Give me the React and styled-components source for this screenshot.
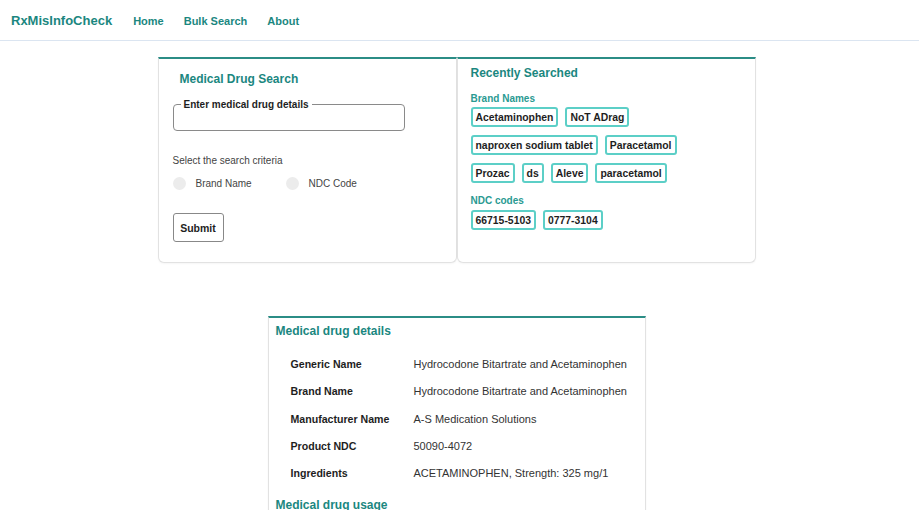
import React from "react";
import styled, { createGlobalStyle } from "styled-components";

const GlobalStyle = createGlobalStyle`
  * {
    margin: 0;
    padding: 0;
    box-sizing: border-box;
  }
  body {
    font-family: "Liberation Sans", Arial, sans-serif;
    background: #ffffff;
    color: #222;
  }
`;

const teal = "#1b877f";

const Nav = styled.nav`
  height: 41px;
  display: flex;
  align-items: center;
  padding: 1px 0 0 11px;
  border-bottom: 1px solid #dbe5f1;
`;

const Logo = styled.div`
  font-size: 13px;
  font-weight: bold;
  color: ${teal};
  margin-right: 21px;
`;

const NavLink = styled.a`
  font-size: 11px;
  font-weight: bold;
  color: ${teal};
  margin-right: 20px;
  text-decoration: none;
`;

const Main = styled.main`
  display: flex;
  flex-direction: column;
  align-items: center;
  padding-top: 16px;
  padding-right: 6px;
`;

const Row = styled.div`
  display: grid;
  grid-template-columns: 299px 299px;
  width: 598px;
`;

const Card = styled.section`
  background: #fff;
  border: 1px solid #e2e2e2;
  border-top: 2px solid #2b8d86;
  border-radius: 0 0 6px 6px;
  box-shadow: 0 1px 2px rgba(0, 0, 0, 0.04);
  padding: ${(p) => p.$pad || "14px"};
  height: ${(p) => p.$h || "auto"};
`;

const Title = styled.h2`
  font-size: 12px;
  font-weight: bold;
  color: ${teal};
  margin-left: ${(p) => p.$indent || 0}px;
  margin-top: ${(p) => p.$top || 0}px;
`;

const Fieldset = styled.fieldset`
  width: 232px;
  height: 32px;
  border: 1.5px solid #8a8a8a;
  border-radius: 4px;
  margin-top: 13px;
  padding: 0 7px;
`;

const Legend = styled.legend`
  font-size: 10px;
  font-weight: bold;
  padding: 0 3px;
  color: #1e1e1e;
`;

const Hint = styled.p`
  font-size: 10px;
  color: #444;
  margin-top: 24px;
`;

const Radios = styled.div`
  display: flex;
  margin-top: 11px;
`;

const RadioOpt = styled.label`
  display: flex;
  align-items: center;
  font-size: 10px;
  color: #444;
  width: 113px;
`;

const Dot = styled.span`
  width: 13px;
  height: 13px;
  border-radius: 50%;
  background: #ececec;
  margin-right: 10px;
`;

const Submit = styled.button`
  margin-top: 23px;
  width: 51px;
  height: 29px;
  background: #fff;
  border: 1.5px solid #888;
  border-radius: 3px;
  font-family: inherit;
  font-size: 10.5px;
  font-weight: bold;
  color: #1e1e1e;
`;

const Sub = styled.h3`
  font-size: 10px;
  font-weight: bold;
  color: #2a9a92;
  margin-top: ${(p) => p.$top || 0}px;
  margin-bottom: ${(p) => p.$bottom || 3}px;
`;

const Tags = styled.div`
  display: flex;
  flex-wrap: wrap;
  gap: 8px 7px;
  width: 240px;
`;

const Tag = styled.span`
  height: 20px;
  display: inline-flex;
  align-items: center;
  padding: 0 3px;
  border: 2px solid #5ccfc7;
  border-radius: 3px;
  font-size: 10.4px;
  font-weight: bold;
  color: #1e1e1e;
`;

const DetailCard = styled(Card)`
  width: 378px;
  margin-top: 53px;
  border-bottom: none;
  border-radius: 0;
  padding: 6px 7px 0;
`;

const Table = styled.div`
  display: grid;
  grid-template-columns: 123px 1fr;
  padding: 20px 0 0 15px;
`;

const Label = styled.div`
  font-size: 10.6px;
  font-weight: bold;
  color: #1e1e1e;
  height: 27.3px;
`;

const Value = styled.div`
  font-size: 11px;
  color: #333;
  height: 27.3px;
`;

const brands = [
  "Acetaminophen",
  "NoT ADrag",
  "naproxen sodium tablet",
  "Paracetamol",
  "Prozac",
  "ds",
  "Aleve",
  "paracetamol",
];
const ndcs = ["66715-5103", "0777-3104"];

const details = [
  ["Generic Name", "Hydrocodone Bitartrate and Acetaminophen"],
  ["Brand Name", "Hydrocodone Bitartrate and Acetaminophen"],
  ["Manufacturer Name", "A-S Medication Solutions"],
  ["Product NDC", "50090-4072"],
  ["Ingredients", "ACETAMINOPHEN, Strength: 325 mg/1"],
];

export default function App() {
  return (
    <div>
      <GlobalStyle />
      <Nav>
        <Logo>RxMisInfoCheck</Logo>
        <NavLink href="#">Home</NavLink>
        <NavLink href="#">Bulk Search</NavLink>
        <NavLink href="#">About</NavLink>
      </Nav>
      <Main>
        <Row>
          <Card $h="206px" $pad="13px 14px">
            <Title $indent={7}>Medical Drug Search</Title>
            <Fieldset>
              <Legend>Enter medical drug details</Legend>
            </Fieldset>
            <Hint>Select the search criteria</Hint>
            <Radios>
              <RadioOpt>
                <Dot />
                Brand Name
              </RadioOpt>
              <RadioOpt>
                <Dot />
                NDC Code
              </RadioOpt>
            </Radios>
            <Submit>Submit</Submit>
          </Card>
          <Card $h="206px" $pad="7px 13px">
            <Title>Recently Searched</Title>
            <Sub $top={13}>Brand Names</Sub>
            <Tags>
              {brands.map((b) => (
                <Tag key={b}>{b}</Tag>
              ))}
            </Tags>
            <Sub $top={12} $bottom={4}>NDC codes</Sub>
            <Tags>
              {ndcs.map((n) => (
                <Tag key={n}>{n}</Tag>
              ))}
            </Tags>
          </Card>
        </Row>
        <DetailCard>
          <Title>Medical drug details</Title>
          <Table>
            {details.map(([k, v]) => (
              <React.Fragment key={k}>
                <Label>{k}</Label>
                <Value>{v}</Value>
              </React.Fragment>
            ))}
          </Table>
          <Title $top={4}>Medical drug usage</Title>
        </DetailCard>
      </Main>
    </div>
  );
}
